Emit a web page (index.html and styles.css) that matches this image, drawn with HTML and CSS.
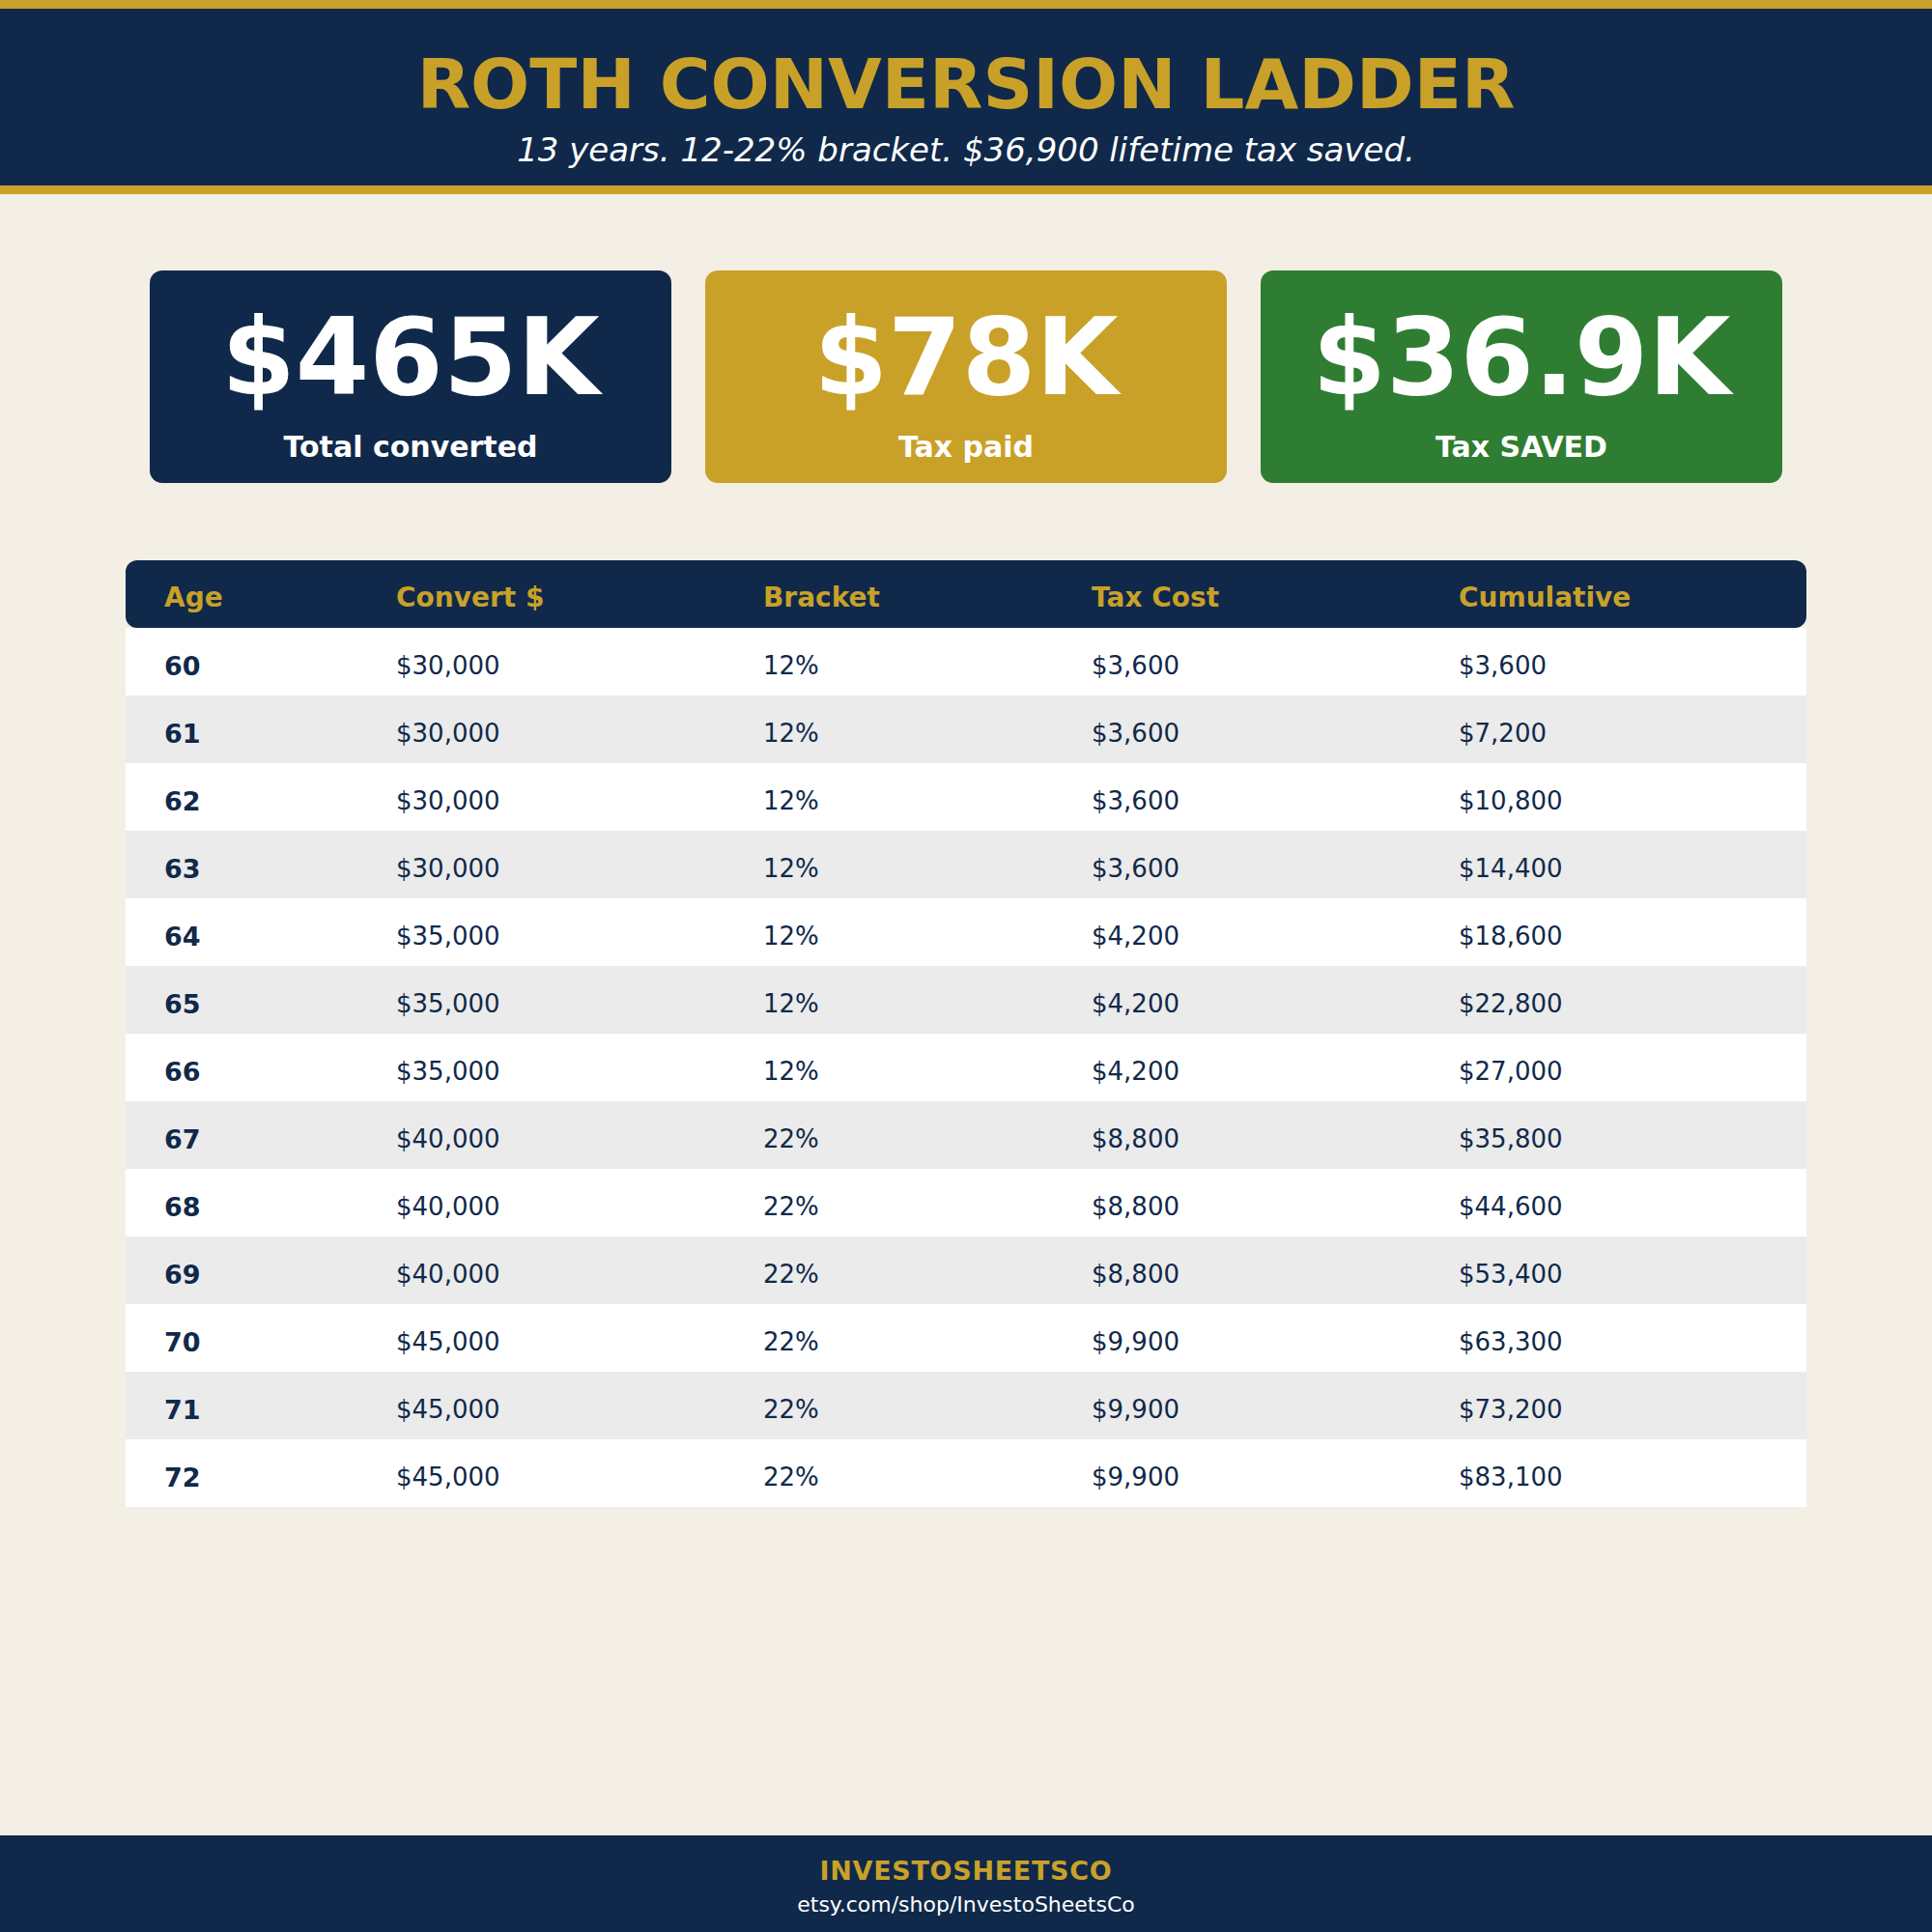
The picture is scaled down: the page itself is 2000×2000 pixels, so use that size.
FILE: index.html
```html
<!DOCTYPE html>
<html lang="en">
<head>
<meta charset="utf-8">
<title>Roth Conversion Ladder</title>
<link rel="stylesheet" href="styles.css">
</head>
<body>
<div class="page">
  <header class="hero">
    <h1 class="title">ROTH CONVERSION LADDER</h1>
    <p class="subtitle">13 years. 12-22% bracket. $36,900 lifetime tax saved.</p>
  </header>

  <section class="cards">
    <div class="card card-navy">
      <div class="card-value">$465K</div>
      <div class="card-label">Total converted</div>
    </div>
    <div class="card card-gold">
      <div class="card-value">$78K</div>
      <div class="card-label">Tax paid</div>
    </div>
    <div class="card card-green">
      <div class="card-value">$36.9K</div>
      <div class="card-label">Tax SAVED</div>
    </div>
  </section>

  <section class="table">
    <div class="row head">
      <div class="cell">Age</div>
      <div class="cell">Convert $</div>
      <div class="cell">Bracket</div>
      <div class="cell">Tax Cost</div>
      <div class="cell">Cumulative</div>
    </div>
    <div class="row"><div class="cell age">60</div><div class="cell">$30,000</div><div class="cell">12%</div><div class="cell">$3,600</div><div class="cell">$3,600</div></div>
    <div class="row alt"><div class="cell age">61</div><div class="cell">$30,000</div><div class="cell">12%</div><div class="cell">$3,600</div><div class="cell">$7,200</div></div>
    <div class="row"><div class="cell age">62</div><div class="cell">$30,000</div><div class="cell">12%</div><div class="cell">$3,600</div><div class="cell">$10,800</div></div>
    <div class="row alt"><div class="cell age">63</div><div class="cell">$30,000</div><div class="cell">12%</div><div class="cell">$3,600</div><div class="cell">$14,400</div></div>
    <div class="row"><div class="cell age">64</div><div class="cell">$35,000</div><div class="cell">12%</div><div class="cell">$4,200</div><div class="cell">$18,600</div></div>
    <div class="row alt"><div class="cell age">65</div><div class="cell">$35,000</div><div class="cell">12%</div><div class="cell">$4,200</div><div class="cell">$22,800</div></div>
    <div class="row"><div class="cell age">66</div><div class="cell">$35,000</div><div class="cell">12%</div><div class="cell">$4,200</div><div class="cell">$27,000</div></div>
    <div class="row alt"><div class="cell age">67</div><div class="cell">$40,000</div><div class="cell">22%</div><div class="cell">$8,800</div><div class="cell">$35,800</div></div>
    <div class="row"><div class="cell age">68</div><div class="cell">$40,000</div><div class="cell">22%</div><div class="cell">$8,800</div><div class="cell">$44,600</div></div>
    <div class="row alt"><div class="cell age">69</div><div class="cell">$40,000</div><div class="cell">22%</div><div class="cell">$8,800</div><div class="cell">$53,400</div></div>
    <div class="row"><div class="cell age">70</div><div class="cell">$45,000</div><div class="cell">22%</div><div class="cell">$9,900</div><div class="cell">$63,300</div></div>
    <div class="row alt"><div class="cell age">71</div><div class="cell">$45,000</div><div class="cell">22%</div><div class="cell">$9,900</div><div class="cell">$73,200</div></div>
    <div class="row"><div class="cell age">72</div><div class="cell">$45,000</div><div class="cell">22%</div><div class="cell">$9,900</div><div class="cell">$83,100</div></div>
  </section>

  <footer class="footer">
    <div class="brand">INVESTOSHEETSCO</div>
    <div class="url">etsy.com/shop/InvestoSheetsCo</div>
  </footer>
</div>
</body>
</html>
```

FILE: styles.css
```css
* {
  box-sizing: border-box;
}

html, body {
  margin: 0;
  padding: 0;
}

body {
  background: #f3efe4;
  font-family: "DejaVu Sans", "Liberation Sans", sans-serif;
  color: #10294a;
}

.page {
  width: 2000px;
  min-height: 2000px;
  display: flex;
  flex-direction: column;
}

/* Header */
.hero {
  background: #10294a;
  border-top: 9px solid #c9a129;
  border-bottom: 9px solid #c9a129;
  height: 201px;
  padding-top: 42px;
  display: flex;
  flex-direction: column;
  align-items: center;
  gap: 15px;
}

.title {
  margin: 0;
  font-size: 72px;
  line-height: 1;
  font-weight: bold;
  color: #c9a129;
}

.subtitle {
  margin: 0;
  font-size: 34px;
  line-height: 1;
  font-style: italic;
  color: #ffffff;
}

/* Stat cards */
.cards {
  width: 1690px;
  margin: 79px auto 0;
  display: grid;
  grid-template-columns: repeat(3, 1fr);
  gap: 35px;
}

.card {
  height: 220px;
  border-radius: 13px;
  padding-top: 35px;
  display: flex;
  flex-direction: column;
  align-items: center;
  gap: 23px;
  color: #ffffff;
}

.card-navy { background: #10294a; }
.card-gold { background: #c9a129; }
.card-green { background: #2f7d32; }

.card-value {
  font-size: 110px;
  line-height: 1;
  font-weight: bold;
}

.card-label {
  font-size: 30px;
  line-height: 1;
  font-weight: bold;
}

/* Table */
.table {
  width: 1740px;
  margin: 80px auto 0;
}

.row {
  display: grid;
  grid-template-columns: 240px 380px 340px 380px 1fr;
  height: 70px;
  background: #ffffff;
}

.row.alt {
  background: #ebebeb;
}

.row.head {
  background: #10294a;
  border-radius: 12px;
}

.cell {
  padding-left: 40px;
  padding-top: 26px;
  font-size: 26px;
  line-height: 1;
  color: #10294a;
}

.head .cell {
  padding-top: 25px;
  font-size: 28px;
  font-weight: bold;
  color: #c9a129;
}

.cell.age {
  padding-top: 26px;
  font-size: 27px;
  font-weight: bold;
}

/* Footer */
.footer {
  margin-top: auto;
  height: 100px;
  background: #10294a;
  padding-top: 23px;
  display: flex;
  flex-direction: column;
  align-items: center;
  gap: 11px;
}

.brand {
  font-size: 27px;
  line-height: 1;
  font-weight: bold;
  letter-spacing: 0.7px;
  color: #c9a129;
}

.url {
  font-size: 22px;
  line-height: 1;
  color: #ffffff;
}
```
